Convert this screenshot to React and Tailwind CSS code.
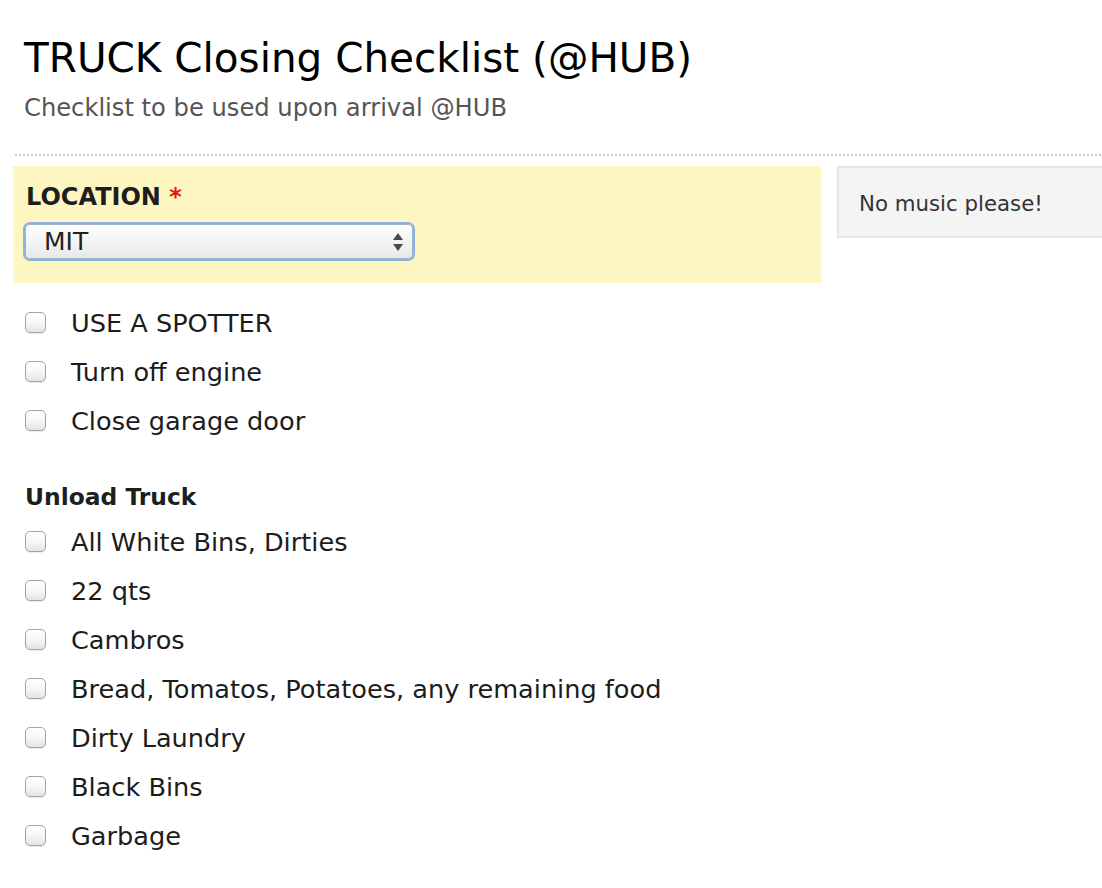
import React from "react";

const first = ["USE A SPOTTER", "Turn off engine", "Close garage door"];
const unload = [
  "All White Bins, Dirties",
  "22 qts",
  "Cambros",
  "Bread, Tomatos, Potatoes, any remaining food",
  "Dirty Laundry",
  "Black Bins",
  "Garbage",
];

function Row({ label }) {
  return (
    <label className="flex h-[49px] items-center gap-[25px]">
      <input
        type="checkbox"
        className="m-0 h-[21px] w-[21px] shrink-0 appearance-none rounded-[5px] border border-[#a3a3a3] bg-linear-to-b from-white via-[#f7f7f7] to-[#e4e4e4] shadow-[0_1px_1px_rgba(0,0,0,0.08)]"
      />
      <span className="text-[25.6px] leading-[30px] text-[#1c1c1c]">{label}</span>
    </label>
  );
}

export default function App() {
  return (
    <div className="min-h-screen w-full overflow-hidden bg-white font-['DejaVu_Sans',sans-serif]">
      <div className="pl-[24px] pt-[34px]">
        <h1 className="text-[40.5px] font-normal leading-[48px] text-black">
          TRUCK Closing Checklist (@HUB)
        </h1>
        <p className="mt-[12px] text-[24.2px] leading-[28px] text-[#555]">
          Checklist to be used upon arrival @HUB
        </p>
      </div>

      <div className="ml-[15px] mt-[32px] h-[2px] bg-[repeating-linear-gradient(to_right,#c9c9c9_0px,#c9c9c9_2px,transparent_2px,transparent_4px)]" />

      <div className="mt-[10px] flex items-start gap-[16px] pl-[13px]">
        <div className="w-[808px] shrink-0 bg-[#fdf6c1] pb-[22px] pl-[10px] pt-[17px]">
          <div className="pl-[3px] text-[24px] font-bold leading-[28px] text-[#1e1e1e]">
            LOCATION <span className="text-[#e8141a]">*</span>
          </div>
          <div className="relative mt-[11px] w-[392px]">
            <select
              defaultValue="MIT"
              className="block h-[39px] w-[392px] appearance-none rounded-[7px] border-2 border-[#8db2de] bg-linear-to-b from-white via-[#f4f4f4] to-[#e8e8e8] pl-[19px] text-[25px] leading-[30px] text-[#222] shadow-[inset_0_0_0_1px_#9fb4cc] outline-none font-['DejaVu_Sans',sans-serif]"
            >
              <option>MIT</option>
            </select>
            <svg
              className="pointer-events-none absolute right-[12px] top-[11px]"
              width="10"
              height="18"
              viewBox="0 0 10 18"
            >
              <path d="M5 0 L10 7 L0 7 Z" fill="#4a4a4a" />
              <path d="M0 11 L10 11 L5 18 Z" fill="#4a4a4a" />
            </svg>
          </div>
        </div>
        <div className="w-[320px] shrink-0 border-2 border-[#e6e6e6] bg-[#f4f4f4] pb-[18px] pl-[20px] pt-[22px] text-[21.3px] leading-[28px] text-[#333]">
          No music please!
        </div>
      </div>

      <div className="mt-[15px] pl-[25px]">
        {first.map((l) => (
          <Row key={l} label={l} />
        ))}
        <div className="mt-[38px] text-[23.4px] font-bold leading-[28px] text-[#1e1e1e]">
          Unload Truck
        </div>
        <div className="mt-[6px]">
          {unload.map((l) => (
            <Row key={l} label={l} />
          ))}
        </div>
      </div>
    </div>
  );
}
